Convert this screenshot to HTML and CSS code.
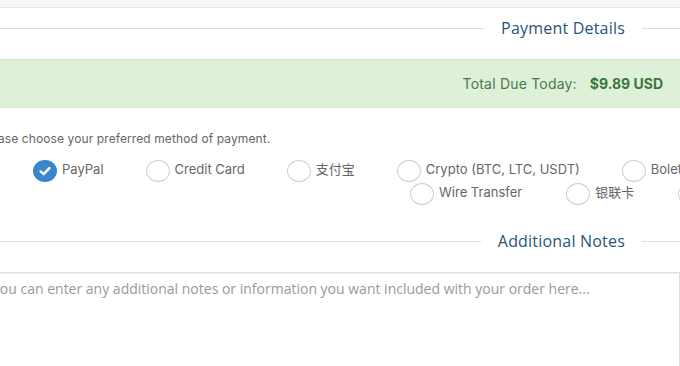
FILE: index.html
```html
<!DOCTYPE html>
<html lang="en">
<head>
<meta charset="utf-8">
<title>Checkout</title>
<link rel="stylesheet" href="styles.css">
</head>
<body>
<div class="topbar"></div>
<main class="page">
  <div class="sub-heading">
    <span class="line"></span>
    <span class="title">Payment Details</span>
    <span class="line line-end"></span>
  </div>

  <div class="total-due">
    <span class="total-label">Total Due Today:</span>
    <span class="total-amount">$9.89 USD</span>
  </div>

  <p class="instructions">Please choose your preferred method of payment.</p>

  <div class="methods">
    <div class="method-row row-one">
      <label class="method">
        <span class="radio radio-checked">
          <svg viewBox="0 0 22 22" width="22" height="22"><path d="M6.6 11.4 L9.6 14.2 L15.4 8.2" fill="none" stroke="#fff" stroke-width="2.4" stroke-linecap="round" stroke-linejoin="round"/></svg>
        </span>
        <span class="method-name">PayPal</span>
      </label>
      <label class="method">
        <span class="radio"></span>
        <span class="method-name">Credit Card</span>
      </label>
      <label class="method">
        <span class="radio"></span>
        <span class="method-name cjk">支付宝</span>
      </label>
      <label class="method">
        <span class="radio"></span>
        <span class="method-name">Crypto (BTC, LTC, USDT)</span>
      </label>
      <label class="method">
        <span class="radio"></span>
        <span class="method-name">Boleto</span>
      </label>
    </div>
    <div class="method-row row-two">
      <label class="method">
        <span class="radio"></span>
        <span class="method-name">Wire Transfer</span>
      </label>
      <label class="method">
        <span class="radio"></span>
        <span class="method-name cjk">银联卡</span>
      </label>
      <label class="method">
        <span class="radio"></span>
        <span class="method-name">Bank Transfer</span>
      </label>
    </div>
  </div>

  <div class="sub-heading notes-heading">
    <span class="line"></span>
    <span class="title">Additional Notes</span>
    <span class="line line-end notes-end"></span>
  </div>

  <textarea class="notes" placeholder="You can enter any additional notes or information you want included with your order here..."></textarea>
</main>
</body>
</html>
```

FILE: styles.css
```css
html, body {
  margin: 0;
  padding: 0;
  overflow: hidden;
  background: #fff;
}

body {
  font-family: "Inter", "Liberation Sans", sans-serif;
  color: #666;
}

.topbar {
  height: 7px;
  background: #f6f6f6;
  border-bottom: 1px solid #e6e6e6;
}

.page {
  margin-left: -20px;
  width: 700px;
  display: flex;
  flex-direction: column;
}

.sub-heading {
  margin-top: 8px;
  height: 24px;
  display: flex;
  align-items: center;
}

.sub-heading .line {
  flex: 1;
  height: 1px;
  background: #dcdcdc;
}

.sub-heading .line-end {
  flex: 0 0 38px;
}

.sub-heading .title {
  padding: 0 17px;
  font-family: "Open Sans", "Liberation Sans", sans-serif;
  font-size: 16px;
  letter-spacing: 0.2px;
  line-height: 24px;
  color: #2a5479;
}

.total-due {
  margin-top: 19px;
  height: 47px;
  background: #dff0d8;
  border-top: 1px solid #d6e9c6;
  border-bottom: 1px solid #d6e9c6;
  display: flex;
  justify-content: flex-end;
  align-items: center;
  gap: 13px;
  padding-right: 17px;
  color: #3c763d;
  font-size: 14px;
}

.total-label {
  letter-spacing: 0.2px;
  color: #4a7a4b;
}

.total-amount {
  font-weight: 700;
}

.instructions {
  margin: 22px 0 0;
  font-size: 12px;
  letter-spacing: 0.1px;
  line-height: 18px;
  color: #666;
}

.methods {
  margin-top: 12px;
  display: flex;
  flex-direction: column;
}

.method-row {
  display: flex;
  gap: 42px;
  height: 23px;
}

.row-one {
  padding-left: 53px;
}

.row-two {
  padding-left: 430px;
  gap: 44px;
}

.method {
  display: flex;
  align-items: flex-start;
  gap: 5px;
  white-space: nowrap;
}

.radio {
  flex: 0 0 22px;
  width: 20px;
  height: 20px;
  border: 1px solid #cfcfcf;
  border-radius: 50%;
  box-sizing: content-box;
  display: flex;
  align-items: center;
  justify-content: center;
}

.radio-checked {
  background: #3a87cd;
  border-color: #3a87cd;
}

.radio svg {
  display: block;
  margin: -1px;
}

.method-name {
  font-size: 13px;
  line-height: 18px;
  color: #666;
}

.cjk {
  font-family: "Noto Sans CJK SC", "Inter", sans-serif;
}

.notes-heading {
  margin-top: 23px;
}

.notes-end {
  flex-basis: 36px;
}

.notes {
  margin-top: 19px;
  height: 110px;
  padding: 6px 11px;
  border: 1px solid #dcdcdc;
  border-radius: 0;
  box-shadow: inset 0 1px 1px rgba(0, 0, 0, 0.06);
  font-family: "Open Sans", "Liberation Sans", sans-serif;
  font-size: 14px;
  line-height: 20px;
  color: #555;
  resize: none;
  box-sizing: border-box;
  width: 100%;
}

.notes::placeholder {
  color: #999;
}
```
